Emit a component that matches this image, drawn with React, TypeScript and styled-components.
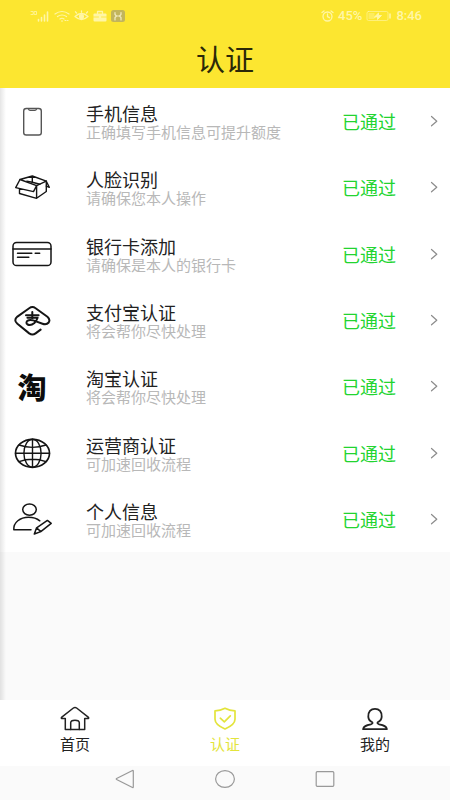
import React from "react";
import styled, { createGlobalStyle } from "styled-components";

const GlobalStyle = createGlobalStyle`
  *, *::before { box-sizing: border-box; }
  body {
    margin: 0;
    background: #fafafa;
    color: #222;
    font-family: "Noto Sans CJK SC", sans-serif;
  }
  svg { display: block; flex: none; fill: none; stroke-linecap: round; stroke-linejoin: round; }
  a { color: inherit; text-decoration: none; }
`;

const Screen = styled.div`
  display: flex;
  flex-direction: column;
  min-height: 100vh;
`;

const TopBar = styled.header`
  background: #fce630;
`;

const StatusBar = styled.div`
  display: flex;
  align-items: center;
  justify-content: space-between;
  height: 32px;
  padding: 0 28px 0 30px;
  color: #fff6a6;
`;

const StatusGroup = styled.div`
  display: flex;
  align-items: center;
  gap: 4px;
  font: 500 13px/16px Roboto, sans-serif;
`;

const Title = styled.h1`
  margin: 0;
  padding-bottom: 4px;
  font-size: 29px;
  line-height: 52px;
  font-weight: 400;
  text-align: center;
  color: #2b2808;
`;

const Content = styled.main`
  position: relative;
  flex: 1;
  &::before {
    content: "";
    position: absolute;
    inset: 0 auto 0 0;
    width: 6px;
    background: linear-gradient(to right, rgba(0, 0, 0, 0.1), rgba(0, 0, 0, 0));
    pointer-events: none;
  }
`;

const List = styled.ul`
  display: grid;
  grid-auto-rows: 1fr;
  min-height: 58vh;
  margin: 0;
  padding: 0;
  list-style: none;
  background: #fff;
`;

const Row = styled.a`
  display: flex;
  align-items: center;
  height: 100%;
  min-height: 60px;
  padding: 0 12px;
`;

const RowText = styled.span`
  display: flex;
  flex: 1;
  flex-direction: column;
  margin-left: 34px;
  padding-top: 2px;
`;

const RowTitle = styled.span`
  font-size: 18px;
  line-height: 20px;
`;

const RowHint = styled.span`
  font-size: 15px;
  line-height: 18px;
  color: #b8b8b8;
`;

const RowState = styled.span`
  margin-right: 34px;
  font-size: 18px;
  line-height: 20px;
  color: #22d430;
`;

const TaobaoMark = styled.span`
  width: 40px;
  font-size: 29px;
  line-height: 34px;
  font-weight: 900;
  text-align: center;
  color: #0c0c0c;
`;

const TabBar = styled.nav`
  display: grid;
  grid-template-columns: repeat(3, 1fr);
  background: #fff;
`;

const Tab = styled.a<{ $active?: boolean }>`
  display: flex;
  flex-direction: column;
  align-items: center;
  gap: 2px;
  padding: 6px 0 12px;
  font-size: 15px;
  line-height: 20px;
  color: ${(p) => (p.$active ? "#e3e43c" : "#222")};
`;

const SystemBar = styled.div`
  display: flex;
  align-items: center;
  justify-content: center;
  gap: 80px;
  height: 34px;
  padding-bottom: 8px;
`;

const SystemButton = styled.button`
  width: 20px;
  height: 20px;
  padding: 0;
  border: 0;
  background: none;
  color: #999;
`;

const RowSvg = ({ children }: { children: React.ReactNode }) => (
  <svg width="40" height="34" viewBox="0 0 40 34" stroke="#151515" strokeWidth="1.5" aria-hidden="true">
    {children}
  </svg>
);

const PhoneIcon = () => (
  <RowSvg>
    <g stroke="#555" strokeWidth="1.4">
      <rect x="11.7" y="4.5" width="17.6" height="26.5" rx="2.6" />
      <path d="M16.5 5.2c.3 1 .8 1.2 1.6 1.2h4.8c.8 0 1.3-.2 1.6-1.2" strokeWidth="1.2" />
    </g>
  </RowSvg>
);

const BoxIcon = () => (
  <RowSvg>
    <g strokeWidth="1.4">
      <path d="M8 9.500 20.300 6l14 5.200-9.700 4.400zM20.300 6v6.200" />
      <path d="M8 9.500 3.700 17.600l17.800 4 3.100-6M24.600 15.600v12.700M7.500 18.700v4.800l17.100 4.800 9.700-6.800V11.200" />
      <path d="m34.300 11.200 3 6.100-3-1.200M20.300 12.200l-5.500-1.100M20.300 12.200l7.500 2" />
    </g>
  </RowSvg>
);

const CardIcon = () => (
  <RowSvg>
    <rect x="1" y="5.6" width="38" height="23" rx="3.6" />
    <path d="M1 12h38M5.5 16.3h14.3M23.2 16.3h4.5M5.5 20.3h11.3" />
  </RowSvg>
);

const AlipayIcon = () => (
  <RowSvg>
    <g strokeWidth="2">
      <path d="m28.600 26.600-5 3.800q-3.200 2.400-6.400 0L5.400 20.800q-4.200-3.600 0-7.200l11.800-8.400q3.200-2.200 6.400 0l11.800 8.600q3.200 2.800 1.300 5.700-2.200 2.600-6.200 1.200l-9.200-3.300q-3.700-1.200-6 .5-1.800 2 .3 3.600 3.200 1.500 6.800-1.500 2.200-2 3.200-5.200H15.400" />
      <path d="M14 12.200h12.600M20.300 9v6.200" />
    </g>
  </RowSvg>
);

const TaobaoIcon = () => <TaobaoMark aria-hidden="true">淘</TaobaoMark>;

const GlobeIcon = () => (
  <RowSvg>
    <g strokeWidth="1.4">
      <ellipse cx="20.5" cy="17.3" rx="17" ry="14" strokeWidth="1.7" />
      <ellipse cx="20.5" cy="17.3" rx="8.6" ry="14" />
      <path d="M20.5 3.3v28M3.5 17.3h34M7 9q13.5 4.8 27 0M7 25.6q13.5-4.8 27 0" />
    </g>
  </RowSvg>
);

const ProfileIcon = () => (
  <RowSvg>
    <ellipse cx="17.5" cy="7.6" rx="6.8" ry="5.6" />
    <path d="M19 27.7H1.8c-.5-7.2 6.3-12.5 14.7-12.5 4.5 0 8.4 1.2 11.3 3.6" />
    <path d="m22.3 32 2.3-6.2 10.8-7.4 3.8 3-10.4 8.2zM24.6 25.8l4.2 3.8" />
  </RowSvg>
);

const Chevron = () => (
  <svg width="8" height="12" viewBox="0 0 8 12" stroke="#8c8c8c" strokeWidth="1.2" aria-hidden="true">
    <path d="m1.5 1.5 5.3 4.7-5.3 4.6" />
  </svg>
);

const HomeIcon = () => (
  <svg width="30" height="26" viewBox="0 0 30 26" stroke="currentColor" strokeWidth="1.5" aria-hidden="true">
    <path d="M5.3 12.6H1.8q-1-.6 0-1.4L13.4 2q1.6-1.2 3.2 0l11.6 9.2q1 .8 0 1.4h-3.5v10.8H5.3z" />
    <path d="M10.7 23.4v-6.6q0-2.6 4.3-2.6t4.3 2.6v6.6" />
  </svg>
);

const ShieldIcon = () => (
  <svg width="30" height="26" viewBox="0 0 30 26" stroke="currentColor" strokeWidth="1.7" aria-hidden="true">
    <path d="M15 2.3q4.5 2.5 10 2.6v8.3c0 4.5-4.8 7.5-10 9.8-5.2-2.3-10-5.3-10-9.8V4.9q5.5-.1 10-2.6z" />
    <path d="m10.3 12.2 4 3.6 6-6" />
  </svg>
);

const MeIcon = () => (
  <svg width="30" height="26" viewBox="0 0 30 26" stroke="currentColor" strokeWidth="1.8" aria-hidden="true">
    <path d="M12.3 16.2c-2.6-1.2-3.8-3.1-4-5.4C8 5.6 10.8 2.8 15 2.8s7 2.8 6.7 8c-.2 2.3-1.4 4.2-4 5.4-.8 1 .2 1.7 1.5 2.1 4.8 1 7.3 1.8 7.7 4.9H3.100c.4-3.100 2.900-3.900 7.700-4.900 1.300-.4 2.300-1.100 1.500-2.100z" />
  </svg>
);

const SignalIcon = () => (
  <svg width="20" height="12" viewBox="0 0 20 12" stroke="currentColor" strokeWidth="1.6" strokeLinecap="butt" aria-hidden="true">
    <path d="M8.5 11V9.5M11.5 11V7.5M14.5 11V5M17.5 11V2" />
    <path d="M1 1.5h2.2v3H1M4.5 1.5h2v3h-2z" strokeWidth=".8" />
  </svg>
);

const WifiIcon = () => (
  <svg width="16" height="12" viewBox="0 0 16 12" stroke="currentColor" strokeWidth="1.2" aria-hidden="true">
    <path d="M1 4q7-5 14 0M3.5 6.6q4.5-3.2 9 0M6 9q2-1.5 4 0" />
    <path d="M7.5 11h1M11 10.5h1M13.5 10.5h.5" />
  </svg>
);

const EyeIcon = () => (
  <svg width="15" height="12" viewBox="0 0 15 12" stroke="currentColor" strokeWidth="1.3" aria-hidden="true">
    <path d="M1 6.5q6.5-6 13 0-6.5 6-13 0zM2.5 3 1.5 1.8M12.5 3l1-1.2M7.5 2V.8" />
    <circle cx="7.5" cy="6.5" r="1.9" fill="currentColor" />
  </svg>
);

const CaseIcon = () => (
  <svg width="14" height="12" viewBox="0 0 14 12" aria-hidden="true">
    <rect x=".5" y="3.5" width="13" height="8" rx="1" fill="currentColor" />
    <path d="M4.5 3.5v-2h5v2" stroke="currentColor" strokeWidth="1.3" />
    <path d="M.5 7h5M8.5 7h5" stroke="#fce630" strokeWidth=".8" />
  </svg>
);

const AppIcon = () => (
  <svg width="14" height="12" viewBox="0 0 14 12" aria-hidden="true">
    <rect width="14" height="12" rx="2.5" fill="#c2b55c" />
    <path d="M4 10V7.500L5.500 6 4 4.500v-2M10 10V7.500L8.500 6 10 4.500v-2M5.500 6h3" stroke="#f3ecc0" strokeWidth="1.2" />
  </svg>
);

const AlarmIcon = () => (
  <svg width="13" height="12" viewBox="0 0 13 12" stroke="currentColor" strokeWidth="1.3" aria-hidden="true">
    <circle cx="6.5" cy="6.5" r="4.5" />
    <path d="M6.5 4v2.7l2 1M1 2.5 3 1M12 2.5 10 1" />
  </svg>
);

const BatteryIcon = () => (
  <svg width="26" height="12" viewBox="0 0 26 12" stroke="currentColor" strokeWidth=".9" aria-hidden="true">
    <rect x="1" y="1.5" width="21" height="9" rx="1.5" opacity=".7" />
    <rect x="2.5" y="3" width="6" height="6" fill="currentColor" stroke="none" opacity=".4" />
    <path d="m8.5 7 4-4v2.5h3l-4 4V7z" fill="currentColor" />
    <path d="M24 4v4" strokeWidth="1.5" />
  </svg>
);

const rows = [
  { title: "手机信息", hint: "正确填写手机信息可提升额度", Icon: PhoneIcon },
  { title: "人脸识别", hint: "请确保您本人操作", Icon: BoxIcon },
  { title: "银行卡添加", hint: "请确保是本人的银行卡", Icon: CardIcon },
  { title: "支付宝认证", hint: "将会帮你尽快处理", Icon: AlipayIcon },
  { title: "淘宝认证", hint: "将会帮你尽快处理", Icon: TaobaoIcon },
  { title: "运营商认证", hint: "可加速回收流程", Icon: GlobeIcon },
  { title: "个人信息", hint: "可加速回收流程", Icon: ProfileIcon },
];

export default function App() {
  return (
    <>
      <GlobalStyle />
      <Screen>
        <TopBar>
          <StatusBar>
            <StatusGroup>
              <SignalIcon />
              <WifiIcon />
              <EyeIcon />
              <CaseIcon />
              <AppIcon />
            </StatusGroup>
            <StatusGroup>
              <AlarmIcon />
              <span>45%</span>
              <BatteryIcon />
              <span>8:46</span>
            </StatusGroup>
          </StatusBar>
          <Title>认证</Title>
        </TopBar>
        <Content>
          <List>
            {rows.map(({ title, hint, Icon }) => (
              <li key={title}>
                <Row href="#">
                  <Icon />
                  <RowText>
                    <RowTitle>{title}</RowTitle>
                    <RowHint>{hint}</RowHint>
                  </RowText>
                  <RowState>已通过</RowState>
                  <Chevron />
                </Row>
              </li>
            ))}
          </List>
        </Content>
        <TabBar>
          <Tab href="#">
            <HomeIcon />
            首页
          </Tab>
          <Tab href="#" $active aria-current="page">
            <ShieldIcon />
            认证
          </Tab>
          <Tab href="#">
            <MeIcon />
            我的
          </Tab>
        </TabBar>
        <SystemBar>
          <SystemButton type="button" aria-label="返回">
            <svg width="20" height="20" viewBox="0 0 20 20" stroke="currentColor" strokeWidth="1.2">
              <path d="M17.5 1.5q.8-.3.8.7v15.6q0 1-.8.7l-15.900-8q-.8-.5 0-1z" />
            </svg>
          </SystemButton>
          <SystemButton type="button" aria-label="主屏幕">
            <svg width="20" height="20" viewBox="0 0 20 20" stroke="currentColor" strokeWidth="1.2">
              <ellipse cx="10" cy="10" rx="9.4" ry="8.4" />
            </svg>
          </SystemButton>
          <SystemButton type="button" aria-label="最近任务">
            <svg width="20" height="20" viewBox="0 0 20 20" stroke="currentColor" strokeWidth="1.2">
              <rect x="1.2" y="2.7" width="17.6" height="14.6" rx="1" />
            </svg>
          </SystemButton>
        </SystemBar>
      </Screen>
    </>
  );
}
